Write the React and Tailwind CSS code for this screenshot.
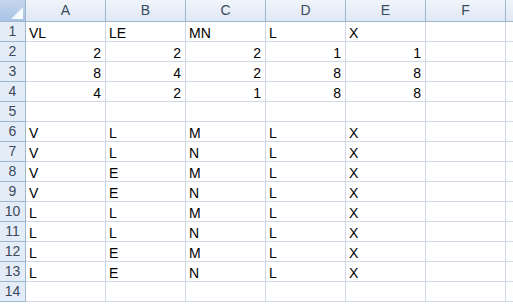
import React from 'react';

const cols = ['A', 'B', 'C', 'D', 'E', 'F'];

// each row: [values], numbers are right-aligned
const rows = [
    ['VL', 'LE', 'MN', 'L', 'X'],
    [2, 2, 2, 1, 1],
    [8, 4, 2, 8, 8],
    [4, 2, 1, 8, 8],
    [],
    ['V', 'L', 'M', 'L', 'X'],
    ['V', 'L', 'N', 'L', 'X'],
    ['V', 'E', 'M', 'L', 'X'],
    ['V', 'E', 'N', 'L', 'X'],
    ['L', 'L', 'M', 'L', 'X'],
    ['L', 'L', 'N', 'L', 'X'],
    ['L', 'E', 'M', 'L', 'X'],
    ['L', 'E', 'N', 'L', 'X'],
    [],
];

export default function App() {
    return (
        <div className="w-[513px] h-[304px] overflow-hidden bg-white text-[14px] text-black" style={{ fontFamily: '"Liberation Sans", Arial, sans-serif' }}>
            {/* Column headers */}
            <div className="flex h-[22px]">
                <div className="w-[26px] shrink-0 border-r border-b border-[#9eb6ce] bg-gradient-to-b from-[#c5d6ec] to-[#a9c3e6] flex items-end justify-end p-[2px]">
                    <svg width="12" height="12" viewBox="0 0 12 12">
                        <defs>
                            <linearGradient id="tri" x1="0" y1="0" x2="1" y2="1">
                                <stop offset="0" stopColor="#e8f0fb" />
                                <stop offset="1" stopColor="#ffffff" />
                            </linearGradient>
                        </defs>
                        <polygon points="12,0 12,12 0,12" fill="url(#tri)" />
                    </svg>
                </div>
                {cols.map((c) => (
                    <div key={c} className="w-[80px] shrink-0 border-r border-b border-[#9eb6ce] bg-gradient-to-b from-[#f1f5fb] to-[#dfe8f5] flex items-center justify-center text-[#3b4a5c]">
                        {c}
                    </div>
                ))}
                <div className="flex-1 border-b border-[#9eb6ce] bg-gradient-to-b from-[#f1f5fb] to-[#dfe8f5]" />
            </div>

            {rows.map((r, i) => (
                <div key={i} className="flex h-[20px]">
                    <div className="w-[26px] shrink-0 border-r border-b border-[#9eb6ce] bg-[#e4ecf7] flex items-center justify-center text-[#3b4a5c]">
                        {i + 1}
                    </div>
                    {cols.map((c, j) => {
                        const v = r[j];
                        const num = typeof v === 'number';
                        return (
                            <div key={c} className={`w-[80px] shrink-0 border-r border-b border-[#d0d7e5] flex items-center leading-none pt-[2px] ${num ? 'justify-end pr-[4px]' : 'pl-[3px]'}`}>
                                {v}
                            </div>
                        );
                    })}
                    <div className="flex-1 border-b border-[#d0d7e5]" />
                </div>
            ))}
        </div>
    );
}
